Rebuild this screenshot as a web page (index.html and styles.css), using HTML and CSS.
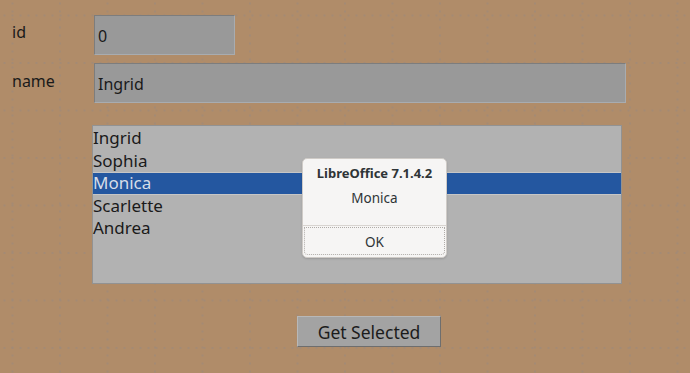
FILE: index.html
```html
<!DOCTYPE html>
<html lang="en">
<head>
    <meta charset="UTF-8">
    <title>Dialog</title>
    <link rel="stylesheet" href="styles.css">
</head>
<body>
    <div class="finestra">
        <div class="riga riga-id">
            <label class="etichetta">id</label>
            <div class="campo campo-id">0</div>
        </div>
        <div class="riga riga-nome">
            <label class="etichetta">name</label>
            <div class="campo campo-nome">Ingrid</div>
        </div>

        <ul class="lista">
            <li>Ingrid</li>
            <li>Sophia</li>
            <li class="selezionato">Monica</li>
            <li>Scarlette</li>
            <li>Andrea</li>
        </ul>

        <button class="pulsante">Get Selected</button>

        <div class="messaggio">
            <div class="messaggio-titolo">LibreOffice 7.1.4.2</div>
            <div class="messaggio-testo">Monica</div>
            <div class="messaggio-azioni">
                <button class="messaggio-ok">OK</button>
            </div>
        </div>
    </div>
</body>
</html>
```

FILE: styles.css
```css
* {
    box-sizing: border-box;
    margin: 0;
    padding: 0;
}

body {
    font-family: 'Noto Sans', 'Open Sans', sans-serif;
    background-color: #b08c69;
    /* griglia a punti dell'editor */
    background-image:
        radial-gradient(circle at 1px 1px, #a08a78 0.6px, transparent 1px),
        radial-gradient(circle at 1px 1px, #a08a78 0.6px, transparent 1px);
    background-size: 8px 47.5px, 47.5px 8px;
    background-position: 3.5px 14.5px, 11.5px 2.5px;
    color: #1a1a1a;
    width: 690px;
    height: 373px;
    overflow: hidden;
}

.finestra {
    position: relative;
    padding: 15px 0 0 12px;
    height: 100%;
}

.riga {
    display: grid;
    grid-template-columns: 82px auto;
}

.riga-nome {
    margin-top: 8px;
}

.etichetta {
    font-size: 16px;
    line-height: 20px;
    padding-top: 7px;
}

.riga-nome .etichetta {
    padding-top: 8px;
}

.campo {
    height: 40px;
    background: #999999;
    border: 1px solid;
    border-color: #7d7d7d #a8acb0 #a8acb0 #7d7d7d;
    font-size: 16px;
    line-height: 40px;
    padding-left: 3px;
}

.campo-id {
    width: 141px;
}

.campo-nome {
    width: 532px;
}

.lista {
    list-style: none;
    margin: 22px 0 0 80px;
    width: 530px;
    height: 159px;
    background: #b2b2b2;
    border: 1px solid #929292;
    font-size: 17px;
    padding-top: 1px;
}

.lista li {
    height: 22.5px;
    line-height: 22px;
}

.lista .selezionato {
    background: #2457a0;
    color: #d6dde8;
    border-top: 1px solid #c6c6c6;
    border-bottom: 1px solid #c6c6c6;
    line-height: 20px;
}

.pulsante {
    display: block;
    margin: 32px 0 0 285px;
    width: 144px;
    height: 31px;
    background: #a3a3a3;
    border: 1px solid;
    border-color: #b8b8b8 #6e6e6e #6e6e6e #b8b8b8;
    font-family: inherit;
    font-size: 17.5px;
    color: #1c1c1c;
}

.messaggio {
    position: absolute;
    left: 302px;
    top: 158px;
    width: 145px;
    height: 100px;
    background: #f6f5f4;
    border: 1px solid #cfcbc7;
    border-radius: 5px;
    box-shadow: 0 1px 2px rgba(0, 0, 0, 0.15);
    text-align: center;
    color: #2e3436;
    display: flex;
    flex-direction: column;
}

.messaggio-titolo {
    font-size: 13px;
    font-weight: 700;
    margin-top: 4px;
    line-height: 20px;
}

.messaggio-testo {
    font-size: 13.5px;
    margin-top: 5px;
    line-height: 20px;
}

.messaggio-azioni {
    margin-top: auto;
    border-top: 1px solid #d8d4d0;
    height: 32px;
    padding: 1px 1px 2px 1px;
}

.messaggio-ok {
    width: 100%;
    height: 100%;
    background: #f6f5f4;
    border: 1px dotted #b0aca8;
    border-radius: 0 0 4px 4px;
    font-family: inherit;
    font-size: 13.5px;
    color: #2e3436;
    padding-top: 2px;
}
```
